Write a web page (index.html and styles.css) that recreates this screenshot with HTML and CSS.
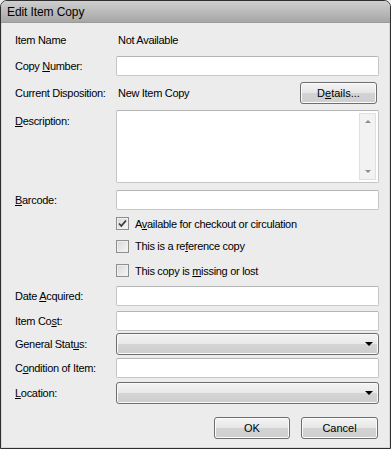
FILE: index.html
```html
<!DOCTYPE html>
<html>
<head>
<meta charset="utf-8">
<link rel="stylesheet" href="styles.css">
</head>
<body>
<div class="window">
  <div class="titlebar">Edit Item Copy</div>
  <div class="content">
    <div class="form">
      <div class="label">Item Name</div>
      <div class="value">Not Available</div>

      <div class="label">Copy <u>N</u>umber:</div>
      <div class="input"></div>

      <div class="label">Current Disposition:</div>
      <div class="split">
        <span class="value">New Item Copy</span>
        <div class="btn details">D<u>e</u>tails...</div>
      </div>

      <div class="label top"><u>D</u>escription:</div>
      <div class="textarea">
        <div class="scroll">
          <span class="arrow up"></span>
          <span class="arrow down"></span>
        </div>
      </div>

      <div class="label"><u>B</u>arcode:</div>
      <div class="input"></div>

      <div></div>
      <div class="check"><span class="box checked"><svg width="11" height="11" viewBox="0 0 11 11"><path d="M2 5.5 L4.3 8 L9 2.5" fill="none" stroke="#3a3a3a" stroke-width="1.8"/></svg></span><span>A<u>v</u>ailable for checkout or circulation</span></div>

      <div></div>
      <div class="check"><span class="box"></span><span>This is a re<u>f</u>erence copy</span></div>

      <div></div>
      <div class="check"><span class="box"></span><span>This copy is <u>m</u>issing or lost</span></div>

      <div class="label">Date <u>A</u>cquired:</div>
      <div class="input"></div>

      <div class="label">Item Co<u>s</u>t:</div>
      <div class="input"></div>

      <div class="label">General Stat<u>u</u>s:</div>
      <div class="select"><span class="caret"></span></div>

      <div class="label">C<u>o</u>ndition of Item:</div>
      <div class="input"></div>

      <div class="label"><u>L</u>ocation:</div>
      <div class="select"><span class="caret"></span></div>
    </div>
    <div class="buttons">
      <div class="btn">OK</div>
      <div class="btn">Cancel</div>
    </div>
  </div>
</div>
</body>
</html>
```
FILE: styles.css
```css
html, body {
  margin: 0;
  padding: 0;
  background: #ececec;
}
.window {
  width: 391px;
  height: 449px;
  box-sizing: border-box;
  border: 1px solid #2e2e2e;
  border-radius: 7px 7px 0 0;
  background: #ececec;
  overflow: hidden;
  display: flex;
  flex-direction: column;
  font-family: "Liberation Sans", Arial, sans-serif;
  font-size: 11px;
  color: #000;
  box-shadow: inset 1px 0 0 #d8d8d8, inset -1px 0 0 #d8d8d8, inset 0 -1px 0 #d8d8d8;
}
.titlebar {
  height: 21px;
  line-height: 22px;
  padding-left: 6px;
  font-size: 12px;
  letter-spacing: -0.1px;
  background: linear-gradient(#cfcfcf, #a6a6a6);
  border-bottom: 1px solid #9a9a9a;
  flex: none;
}
.content {
  flex: 1;
  padding: 5px 11px 0 14px;
  display: flex;
  flex-direction: column;
  letter-spacing: -0.3px;
}
.form {
  display: grid;
  grid-template-columns: 101px 263px;
  grid-template-rows: 24px 27px 27px 81px 26px 21px 24px 25px 26px 23px 24px 24px 25px;
  align-items: center;
}
.label.top {
  align-self: start;
  padding-top: 9px;
}
.value {
  padding-left: 2px;
}
.input {
  height: 20px;
  box-sizing: border-box;
  background: #fff;
  border: 1px solid #c6c6c6;
  border-top-color: #b4b4b4;
  border-radius: 2px;
}
.split {
  display: flex;
  align-items: center;
  justify-content: space-between;
  padding-right: 2px;
}
.btn {
  width: 77px;
  height: 22px;
  box-sizing: border-box;
  border: 1px solid #6e6e6e;
  border-radius: 3px;
  background: linear-gradient(#f4f4f4 0%, #e6e6e6 50%, #d3d3d3 51%, #cfcfcf 100%);
  box-shadow: inset 0 0 0 1px #fbfbfb;
  display: flex;
  align-items: center;
  justify-content: center;
  letter-spacing: 0;
}
.textarea {
  height: 73px;
  box-sizing: border-box;
  background: #fff;
  border: 1px solid #c6c6c6;
  border-top-color: #b4b4b4;
  border-radius: 2px;
  display: flex;
  justify-content: flex-end;
  padding: 2px;
}
.scroll {
  width: 15px;
  background: #f2f2f2;
  border: 1px solid #e0e0e0;
  display: flex;
  flex-direction: column;
  justify-content: space-between;
  align-items: center;
  padding: 6px 0;
}
.arrow {
  width: 0;
  height: 0;
  border-left: 3px solid transparent;
  border-right: 3px solid transparent;
}
.arrow.up {
  border-bottom: 3px solid #8c8c8c;
}
.arrow.down {
  border-top: 3px solid #8c8c8c;
}
.check {
  display: flex;
  align-items: center;
  gap: 6px;
}
.box {
  width: 13px;
  height: 13px;
  box-sizing: border-box;
  border: 1px solid #8e8e8e;
  background: linear-gradient(135deg, #d8d8d8, #f6f6f6);
  box-shadow: inset 0 0 0 1px #f0f0f0;
  display: flex;
  align-items: center;
  justify-content: center;
  flex: none;
}
.box svg {
  display: block;
}
.select {
  height: 22px;
  box-sizing: border-box;
  border: 1px solid #6e6e6e;
  border-radius: 3px;
  background: linear-gradient(#f4f4f4 0%, #e8e8e8 50%, #d4d4d4 51%, #cdcdcd 100%);
  box-shadow: inset 0 0 0 1px #fafafa;
  display: flex;
  align-items: center;
  justify-content: flex-end;
  padding-right: 5px;
}
.caret {
  width: 0;
  height: 0;
  border-left: 4px solid transparent;
  border-right: 4px solid transparent;
  border-top: 4px solid #000;
}
.buttons {
  display: flex;
  justify-content: flex-end;
  gap: 11px;
  margin-top: 12px;
  padding-right: 1px;
}
.buttons .btn:first-child {
  width: 76px;
}
u {
  text-decoration: underline;
  text-underline-offset: 1px;
}
```
